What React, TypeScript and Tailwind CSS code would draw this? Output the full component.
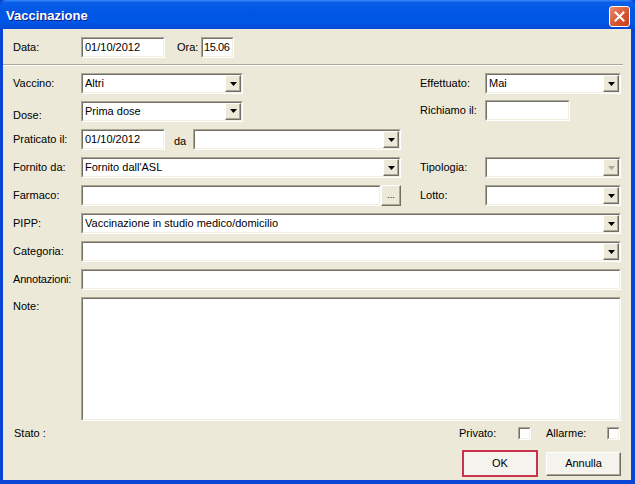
import React from 'react';

const font = "font-['Liberation_Sans',Arial,sans-serif]";

// classic 3D sunken edge, two nested 1px borders
const Sunken: React.FC<{ className?: string; children?: React.ReactNode }> = ({ className = '', children }) => (
  <div className={`border border-t-[#aca899] border-l-[#aca899] border-r-white border-b-white ${className}`}>
    <div className="h-full w-full border border-t-[#716f64] border-l-[#716f64] border-r-[#f1efe2] border-b-[#f1efe2] bg-white flex items-stretch">
      {children}
    </div>
  </div>
);

const TextBox: React.FC<{ value?: string; className?: string; textClass?: string }> = ({ value = '', className = '', textClass = 'pl-[2px]' }) => (
  <Sunken className={`h-[21px] ${className}`}>
    <span className={`flex-1 leading-[17px] text-black whitespace-nowrap ${textClass}`}>{value}</span>
  </Sunken>
);

const ArrowBtn: React.FC<{ disabled?: boolean }> = ({ disabled }) => (
  <div className="w-[16px] h-full bg-[#ece9d8] border border-t-white border-l-white border-r-[#716f64] border-b-[#716f64] shadow-[inset_-1px_-1px_0_#aca899] flex items-center justify-center">
    <svg width="7" height="4" viewBox="0 0 7 4">
      <polygon points="0,0 7,0 3.5,4" fill={disabled ? '#aca899' : '#000'} />
    </svg>
  </div>
);

const Combo: React.FC<{ value?: string; className?: string; disabled?: boolean }> = ({ value = '', className = '', disabled }) => (
  <Sunken className={`h-[21px] ${className}`}>
    <span className="flex-1 pl-[2px] leading-[17px] text-black whitespace-nowrap overflow-hidden">{value}</span>
    <ArrowBtn disabled={disabled} />
  </Sunken>
);

const Label: React.FC<{ text: string; className?: string }> = ({ text, className = '' }) => (
  <span className={`text-black whitespace-nowrap ${className}`}>{text}</span>
);

const Check: React.FC = () => (
  <div className="w-[13px] h-[13px] border border-t-[#aca899] border-l-[#aca899] border-r-white border-b-white">
    <div className="h-full w-full border border-t-[#716f64] border-l-[#716f64] border-r-[#f1efe2] border-b-[#f1efe2] bg-white" />
  </div>
);

export default function App() {
  return (
    <div className={`w-[635px] h-[484px] bg-[#0b45d6] flex flex-col text-[11px] ${font}`}>
      {/* Title bar */}
      <div className="h-[29px] shrink-0 flex items-center justify-between pl-[6px] pr-[5px] rounded-t-[6px] bg-[linear-gradient(to_bottom,#3d8cf5_0%,#0a5eea_8%,#0057e3_40%,#0058e8_75%,#0048d5_100%)]">
        <span className="text-white font-bold text-[13px] pt-[3px] [text-shadow:1px_1px_0_#0a1e8c]">Vaccinazione</span>
        <div className="w-[21px] h-[21px] mt-[3px] rounded-[3px] border border-white bg-[linear-gradient(to_bottom_right,#e98c6e,#d5532f_60%,#c5421f)] flex items-center justify-center">
          <svg width="11" height="11" viewBox="0 0 11 11">
            <path d="M1.5 1.5 L9.5 9.5 M9.5 1.5 L1.5 9.5" stroke="#fff" strokeWidth="2" strokeLinecap="square" />
          </svg>
        </div>
      </div>

      {/* Client area */}
      <div className="flex-1 ml-[3px] mr-[4px] mb-[4px] bg-[#ece9d8] flex flex-col pt-[8px]">
        {/* Data / Ora */}
        <div className="flex items-center pl-[10px] h-[21px]">
          <Label text="Data:" className="w-[68px]" />
          <TextBox value="01/10/2012" className="w-[84px]" />
          <Label text="Ora:" className="ml-[12px] w-[24px]" />
          <TextBox value="15.06" className="w-[33px]" textClass="pl-[1px] tracking-[-0.4px]" />
        </div>

        {/* separator */}
        <div className="mt-[6px] w-[620px] h-[2px] border-t border-t-[#aca899] border-b border-b-white" />

        <div className="flex flex-col gap-[7px] pl-[10px] mt-[7px]">
          {/* Vaccino / Effettuato */}
          <div className="flex items-center h-[21px]">
            <div className="w-[407px] flex items-center">
              <Label text="Vaccino:" className="w-[68px]" />
              <Combo value="Altri" className="w-[162px]" />
            </div>
            <Label text="Effettuato:" className="w-[65px]" />
            <Combo value="Mai" className="w-[136px]" />
          </div>

          {/* Dose / Richiamo */}
          <div className="flex items-center h-[21px]">
            <div className="w-[407px] flex items-center">
              <Label text="Dose:" className="w-[68px] pt-[7px]" />
              <Combo value="Prima dose" className="w-[162px] -mt-[1px]" />
            </div>
            <Label text="Richiamo il:" className="w-[65px] -mt-[2px]" />
            <TextBox className="w-[85px] -mt-[2px]" />
          </div>

          {/* Praticato il / da */}
          <div className="flex items-center h-[21px]">
            <Label text="Praticato il:" className="w-[68px]" />
            <TextBox value="01/10/2012" className="w-[84px]" />
            <Label text="da" className="ml-[9px] w-[19px] pt-[3px]" />
            <Combo className="w-[208px]" />
          </div>

          {/* Fornito da / Tipologia */}
          <div className="flex items-center h-[21px]">
            <div className="w-[407px] flex items-center">
              <Label text="Fornito da:" className="w-[68px]" />
              <Combo value="Fornito dall'ASL" className="w-[320px]" />
            </div>
            <Label text="Tipologia:" className="w-[65px]" />
            <Combo className="w-[136px]" disabled />
          </div>

          {/* Farmaco / Lotto */}
          <div className="flex items-center h-[21px]">
            <div className="w-[407px] flex items-center">
              <Label text="Farmaco:" className="w-[68px]" />
              <TextBox className="w-[300px]" />
              <div className="w-[20px] h-[21px] bg-[#ece9d8] border border-t-white border-l-white border-r-[#716f64] border-b-[#716f64] shadow-[inset_-1px_-1px_0_#aca899] flex items-center justify-center text-[9px] leading-none pb-[1px]">
                ...
              </div>
            </div>
            <Label text="Lotto:" className="w-[65px]" />
            <Combo className="w-[136px]" />
          </div>

          {/* PIPP */}
          <div className="flex items-center h-[21px]">
            <Label text="PIPP:" className="w-[68px]" />
            <Combo value="Vaccinazione in studio medico/domicilio" className="w-[540px]" />
          </div>

          {/* Categoria */}
          <div className="flex items-center h-[21px]">
            <Label text="Categoria:" className="w-[68px]" />
            <Combo className="w-[540px]" />
          </div>

          {/* Annotazioni */}
          <div className="flex items-center h-[21px]">
            <Label text="Annotazioni:" className="w-[68px] tracking-[-0.2px]" />
            <TextBox className="w-[540px]" />
          </div>

          {/* Note */}
          <div className="flex items-start">
            <Label text="Note:" className="w-[68px] pt-[1px]" />
            <Sunken className="w-[540px] h-[124px]" />
          </div>
        </div>

        {/* Stato / Privato / Allarme */}
        <div className="flex items-center pl-[11px] pr-[11px] mt-[5px] h-[14px]">
          <Label text="Stato :" />
          <div className="flex-1" />
          <Label text="Privato:" className="w-[59px]" />
          <Check />
          <Label text="Allarme:" className="ml-[15px] w-[61px]" />
          <Check />
        </div>

        {/* Buttons */}
        <div className="flex items-center justify-end gap-[8px] pr-[10px] mt-[10px]">
          <div className="w-[76px] h-[27px] border-2 border-[#c8324a] p-[1px] bg-[#f4f3ee]">
            <div className="w-full h-full flex items-center justify-center text-black">OK</div>
          </div>
          <div className="w-[75px] h-[24px] bg-[#f4f3ee] border border-t-white border-l-white border-r-[#716f64] border-b-[#716f64] shadow-[inset_-1px_-1px_0_#aca899] flex items-center justify-center text-black">
            Annulla
          </div>
        </div>
      </div>
    </div>
  );
}
